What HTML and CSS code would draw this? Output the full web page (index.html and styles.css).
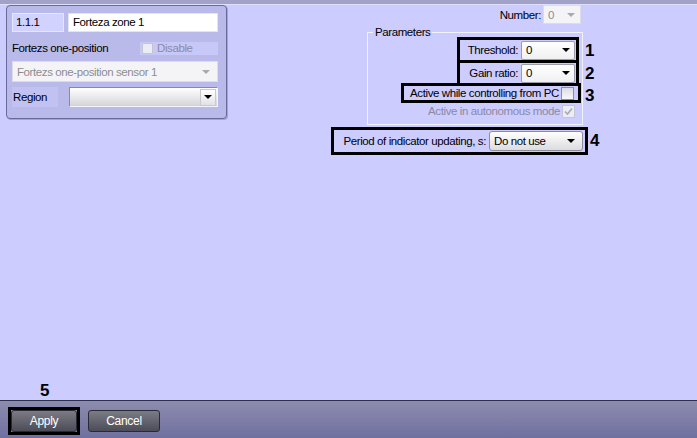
FILE: index.html
```html
<!DOCTYPE html>
<html>
<head>
<meta charset="utf-8">
<link rel="stylesheet" href="styles.css">
</head>
<body>
<div class="window">
  <div class="topstrip"></div>
  <div class="content">
    <div class="panel">
      <div class="prow prow-id">
        <div class="idbox">1.1.1</div>
        <div class="namebox">Forteza zone 1</div>
      </div>
      <div class="prow prow-type">
        <span class="plabel">Fortezs one-position</span>
        <span class="disable"><span class="cb cb-dis"></span><span class="distext">Disable</span></span>
      </div>
      <div class="combo combo-disabled combo-sensor">
        <span class="ctext">Fortezs one-position sensor 1</span>
        <span class="arrow arrow-grey"></span>
      </div>
      <div class="prow prow-region">
        <span class="plabel region-label">Region</span>
        <div class="combo combo-region">
          <span class="ctext"></span>
          <span class="rbtn"><span class="arrow"></span></span>
        </div>
      </div>
    </div>

    <div class="right">
      <div class="numrow">
        <span class="numlabel">Number:</span>
        <div class="combo combo-disabled combo-num">
          <span class="ctext">0</span>
          <span class="arrow arrow-grey"></span>
        </div>
      </div>

      <fieldset class="group">
        <legend class="legend">Parameters</legend>
        <div class="ginner">
          <div class="hl hl-small">
            <span class="flabel">Threshold:</span>
            <div class="combo combo-white combo-small">
              <span class="ctext">0</span>
              <span class="arrow"></span>
            </div>
            <span class="mark">1</span>
          </div>
          <div class="hl hl-small hl-next">
            <span class="flabel">Gain ratio:</span>
            <div class="combo combo-white combo-small">
              <span class="ctext">0</span>
              <span class="arrow"></span>
            </div>
            <span class="mark">2</span>
          </div>
          <div class="hl hl-check hl-next">
            <span class="flabel">Active while controlling from PC</span>
            <span class="cb"></span>
            <span class="mark mark-3">3</span>
          </div>
          <div class="autorow">
            <span class="flabel grey">Active in autonomous mode</span>
            <span class="cb cb-dis">
              <svg class="check" viewBox="0 0 11 11" width="11" height="11"><polyline points="2,5.5 4.5,8 9,2.5" fill="none" stroke="#a8a8b8" stroke-width="1.6"/></svg>
            </span>
          </div>
        </div>
      </fieldset>

      <div class="hl hl-period">
        <span class="flabel">Period of indicator updating, s:</span>
        <div class="combo combo-grad combo-period">
          <span class="ctext">Do not use</span>
          <span class="arrow"></span>
        </div>
        <span class="mark mark-4">4</span>
      </div>
    </div>
  </div>

  <div class="bottombar">
    <span class="mark mark-5">5</span>
    <div class="hl hl-apply">
      <button class="btn btn-apply">Apply</button>
    </div>
    <button class="btn btn-cancel">Cancel</button>
  </div>
</div>
</body>
</html>
```

FILE: styles.css
```css
html, body {
  margin: 0;
  padding: 0;
}

body {
  font-family: "Liberation Sans", Arial, sans-serif;
  font-size: 11.5px;
  letter-spacing: -0.4px;
  color: #000;
}

.window {
  width: 697px;
  height: 438px;
  background: #ccccff;
  display: flex;
  flex-direction: column;
  overflow: hidden;
}

.topstrip {
  height: 4px;
  background: #a2a2c8;
  border-bottom: 1px solid #dedeff;
  flex: none;
}

.content {
  flex: 1;
  display: flex;
  align-items: flex-start;
  position: relative;
}

/* ---------- left panel ---------- */
.panel {
  margin-left: 6px;
  width: 221px;
  height: 114px;
  box-sizing: border-box;
  border: 1px solid #6a6a9a;
  border-radius: 4px;
  background: #babaea;
  box-shadow: 1px 1px 0 #a4a4d4;
  padding: 7px 0 0 5px;
  display: flex;
  flex-direction: column;
}

.prow {
  display: flex;
  align-items: center;
}

.prow-id {
  height: 19px;
  gap: 4px;
}

.idbox {
  width: 52px;
  height: 19px;
  box-sizing: border-box;
  background: #d2d2ff;
  border: 1px solid #e6e6ff;
  padding-left: 3px;
  line-height: 17px;
}

.namebox {
  width: 150px;
  height: 19px;
  box-sizing: border-box;
  background: #fff;
  border: 1px solid #e4e4ee;
  padding-left: 4px;
  line-height: 17px;
}

.prow-type {
  margin-top: 10px;
  height: 13px;
  justify-content: space-between;
  width: 206px;
}

.plabel {
  line-height: 13px;
}

.disable {
  width: 78px;
  height: 13px;
  background: #c8c8f8;
  display: flex;
  align-items: center;
  padding-left: 2px;
  box-sizing: border-box;
}

.distext {
  color: #8a8aa4;
  margin-left: 4px;
  line-height: 13px;
}

.cb {
  width: 13px;
  height: 13px;
  box-sizing: border-box;
  border: 1px solid #8c8ca4;
  background: linear-gradient(#dcdce4, #f8f8fc);
  display: inline-flex;
  align-items: center;
  justify-content: center;
  flex: none;
}

.cb-dis {
  width: 11px;
  height: 11px;
  border-color: #c4c4d4;
  background: #ececf4;
}

.autorow .cb-dis {
  width: 13px;
  height: 13px;
}

.check {
  display: block;
}

/* ---------- combos ---------- */
.combo {
  display: flex;
  align-items: center;
  justify-content: space-between;
  box-sizing: border-box;
  flex: none;
}

.ctext {
  padding-left: 4px;
  white-space: nowrap;
}

.arrow {
  width: 0;
  height: 0;
  border-left: 4px solid transparent;
  border-right: 4px solid transparent;
  border-top: 4px solid #000;
  margin-right: 4px;
}

.arrow-grey {
  border-top-color: #a8a8b0;
}

.combo-disabled {
  background: #f4f4f6;
  border: 1px solid #dcdce6;
  color: #8c8c94;
}

.combo-sensor {
  margin-top: 6px;
  width: 206px;
  height: 21px;
}

.combo-sensor .arrow {
  margin-right: 7px;
}

.prow-region {
  margin-top: 5px;
  height: 20px;
}

.region-label {
  width: 46px;
  height: 20px;
  line-height: 20px;
  background: #c2c2f2;
  padding-left: 1px;
  box-sizing: border-box;
}

.combo-region {
  margin-left: 11px;
  width: 149px;
  height: 20px;
  border: 1px solid;
  border-color: #8a8a9a #f4f4ff #f4f4ff #8a8a9a;
  background: linear-gradient(#ffffff, #d4d4d8);
  padding-right: 1px;
}

.rbtn {
  width: 16px;
  height: 17px;
  box-sizing: border-box;
  background: linear-gradient(#ffffff, #e2e2e6);
  border: 1px solid #c8c8d0;
  display: flex;
  align-items: center;
  justify-content: center;
}

.rbtn .arrow {
  margin-right: 0;
}

/* ---------- right side ---------- */
.right {
  margin-left: 103px;
  width: 262px;
  display: flex;
  flex-direction: column;
}

.numrow {
  display: flex;
  justify-content: flex-end;
  align-items: center;
  padding-right: 11px;
  height: 19px;
}

.numlabel {
  margin-right: 2px;
}

.combo-num {
  width: 38px;
  height: 19px;
}

.combo-num .arrow {
  margin-right: 5px;
}

.group {
  margin: 3px 0 0 37px;
  width: 216px;
  box-sizing: border-box;
  border: 1px solid #f2f2ff;
  padding: 0 0 6px 0;
  min-width: 0;
}

.legend {
  margin-left: 5px;
  padding: 0 2px;
  line-height: 10px;
  height: 10px;
}

.ginner {
  display: flex;
  flex-direction: column;
  align-items: flex-end;
}

.hl {
  position: relative;
  box-sizing: border-box;
  border: 3px solid #000;
  display: flex;
  align-items: center;
  justify-content: flex-end;
}

.hl-next {
  margin-top: -3px;
}

.hl-small {
  width: 122px;
  height: 26px;
  margin-right: 3px;
  padding-right: 1px;
}

.flabel {
  white-space: nowrap;
}

.grey {
  color: #8a8aa2;
}

.hl-small .flabel {
  margin-right: 3px;
}

.combo-white {
  background: linear-gradient(#ffffff, #f0f0f2);
  border: 1px solid #9c9cac;
  border-radius: 2px;
}

.combo-small {
  width: 54px;
  height: 19px;
}

.combo-small .arrow {
  margin-right: 4px;
}

.hl-check {
  width: 180px;
  height: 20px;
  margin-right: 1px;
  padding-right: 4px;
}

.hl-check .flabel {
  margin-right: 2px;
}

.autorow {
  margin-top: 1px;
  margin-right: 7px;
  height: 14px;
  display: flex;
  align-items: center;
}

.autorow .flabel {
  margin-right: 2px;
}

.hl-period {
  margin-top: 2px;
  margin-left: 1px;
  width: 257px;
  height: 28px;
  padding-right: 2px;
}

.hl-period .flabel {
  margin-right: 3px;
}

.combo-grad {
  background: linear-gradient(#ffffff, #dcdce0);
  border: 1px solid #8e8e9a;
  border-radius: 3px;
}

.combo-period {
  width: 94px;
  height: 20px;
}

.combo-period .arrow {
  margin-right: 7px;
}

.mark {
  position: absolute;
  left: calc(100% + 9px);
  top: 2px;
  font-family: "Liberation Sans", Arial, sans-serif;
  font-weight: bold;
  font-size: 17px;
  line-height: 17px;
  letter-spacing: 0;
}

.mark-3 {
  left: calc(100% + 7px);
  top: 1px;
}

.mark-4 {
  left: calc(100% + 5px);
  top: 2px;
}

/* ---------- bottom bar ---------- */
.bottombar {
  flex: none;
  height: 31px;
  border-top: 1px solid #2e2e4e;
  background: linear-gradient(#8c8cae, #7070a0);
  position: relative;
  display: flex;
  align-items: flex-start;
  padding: 6px 0 0 8px;
}

.mark-5 {
  left: 40px;
  top: -19px;
}

.hl-apply {
  width: 72px;
  height: 28px;
  padding: 0;
}

.btn {
  font-family: inherit;
  font-size: 12px;
  letter-spacing: -0.3px;
  color: #fff;
  background: linear-gradient(#7c7c86, #4c4c58);
  border: 1px solid #2a2a36;
  border-radius: 3px;
  padding: 0;
  margin: 0;
  height: 22px;
}

.btn-apply {
  width: 66px;
}

.btn-cancel {
  margin-left: 8px;
  margin-top: 3px;
  width: 72px;
}
```
